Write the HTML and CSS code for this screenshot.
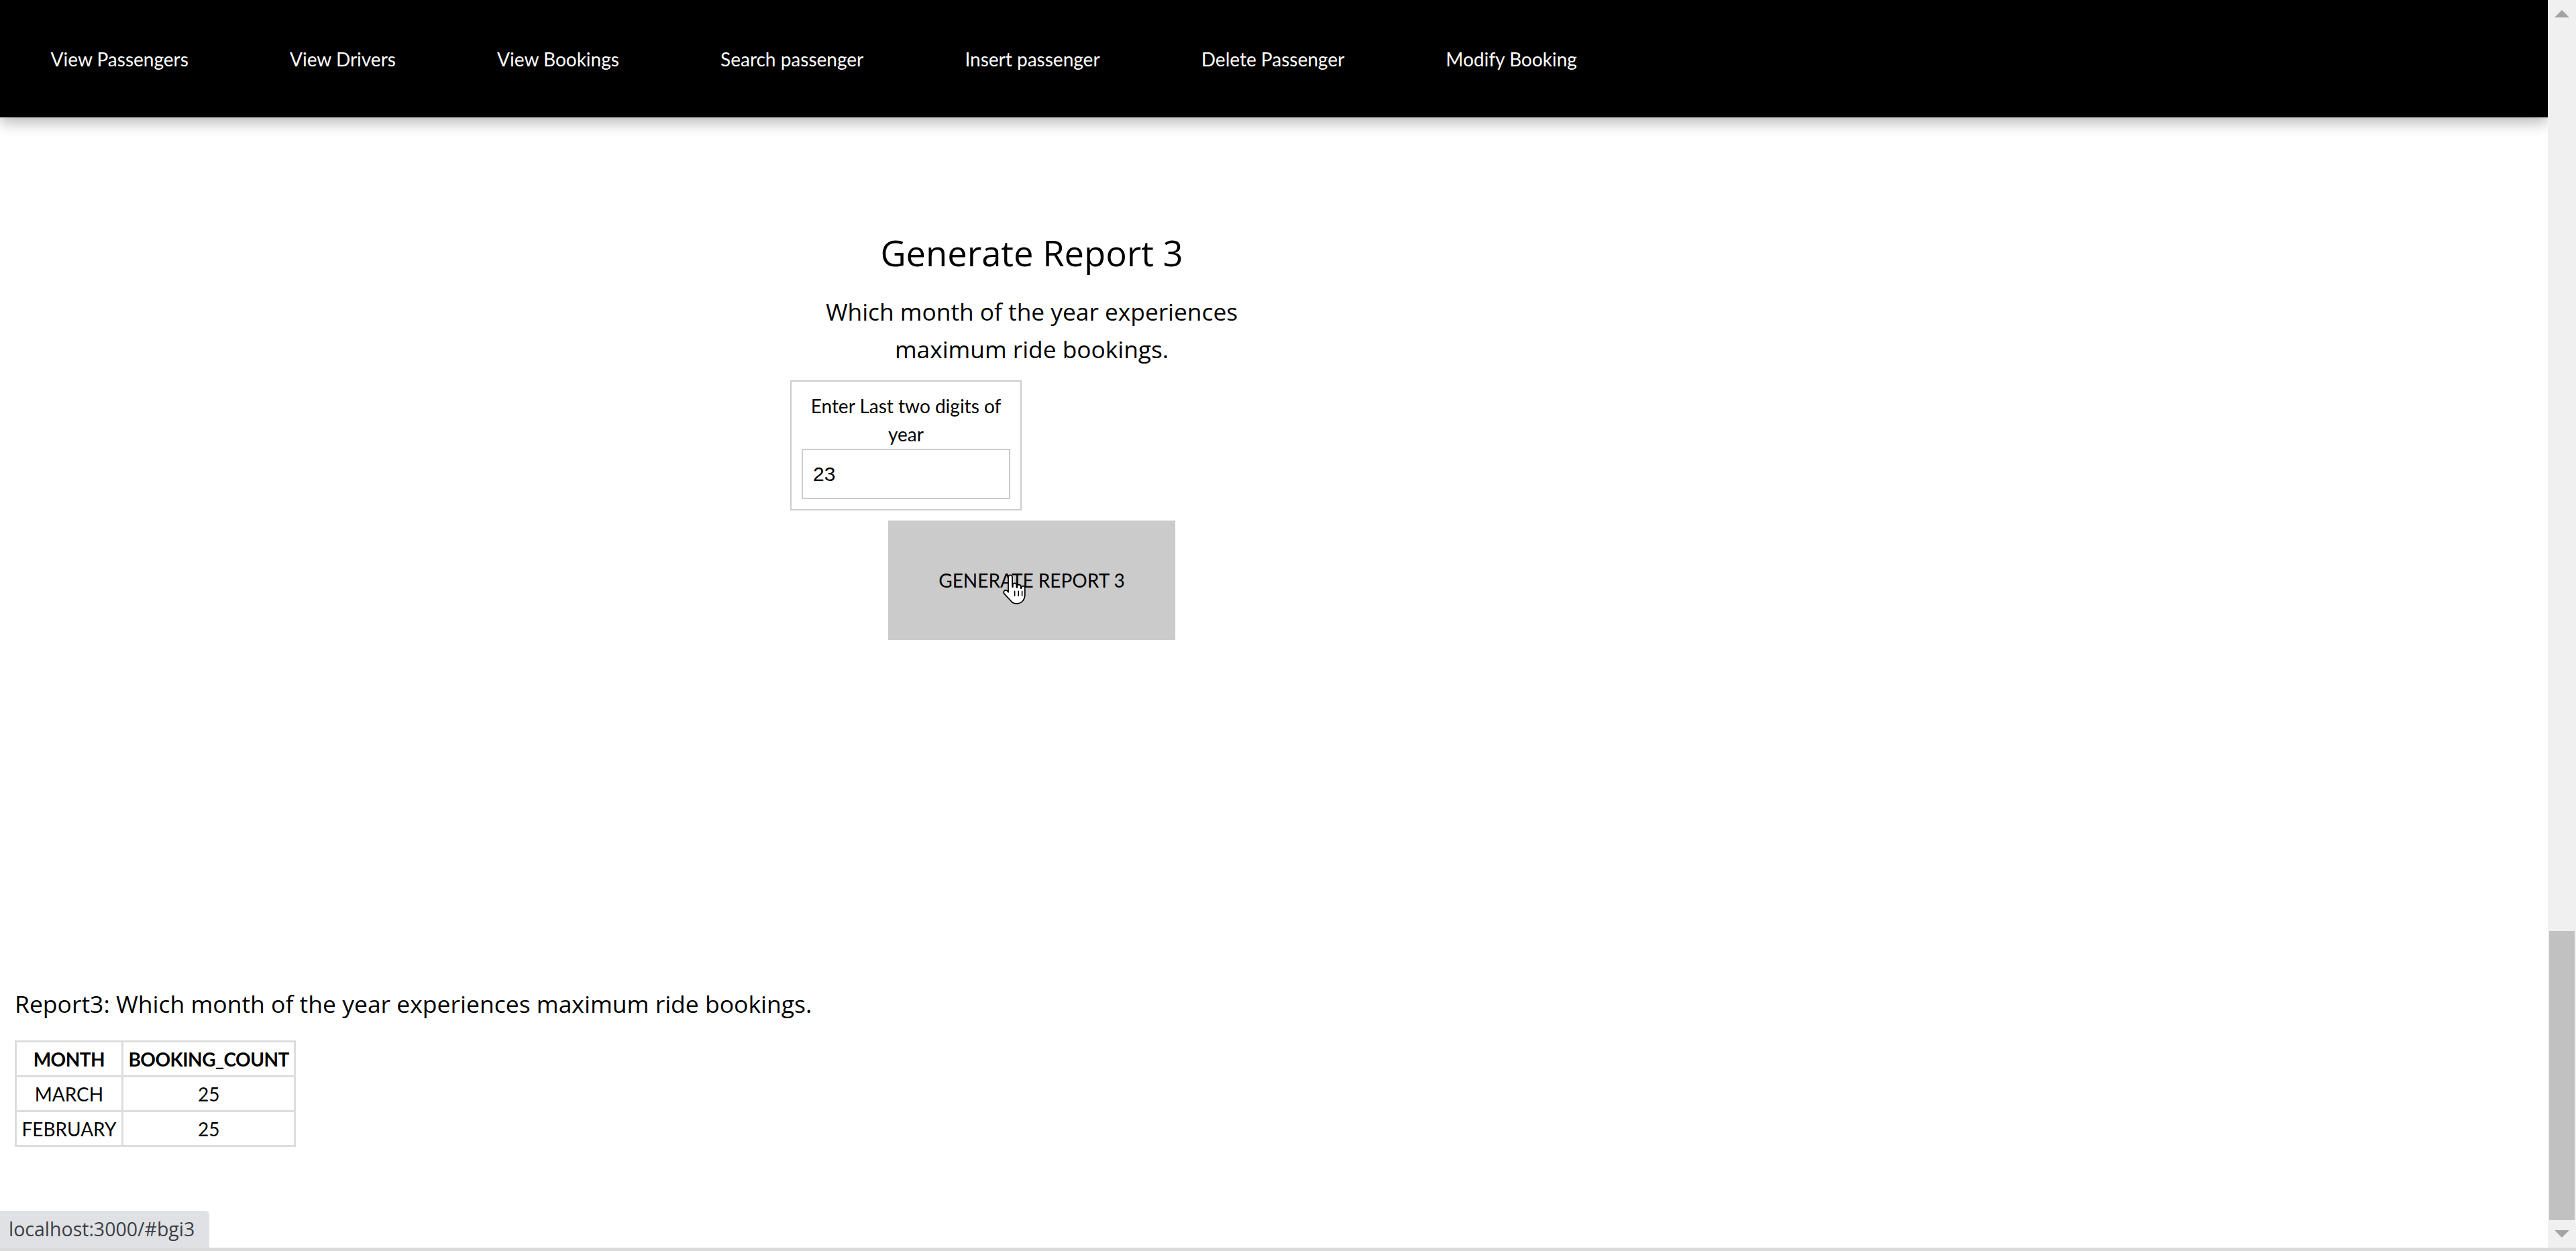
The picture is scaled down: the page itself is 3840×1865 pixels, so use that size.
FILE: index.html
```html
<!DOCTYPE html>
<html lang="en">
<head>
<meta charset="utf-8">
<title>Generate Report 3</title>
<link rel="stylesheet" href="styles.css">
</head>
<body class="page">
<div class="window">
  <div class="viewport">
    <nav class="topnav">
      <a class="topnav-link" href="#vp">View Passengers</a>
      <a class="topnav-link" href="#vd">View Drivers</a>
      <a class="topnav-link" href="#vb">View Bookings</a>
      <a class="topnav-link" href="#sp">Search passenger</a>
      <a class="topnav-link" href="#ip">Insert passenger</a>
      <a class="topnav-link" href="#dp">Delete Passenger</a>
      <a class="topnav-link" href="#mb">Modify Booking</a>
    </nav>

    <section class="report-card">
      <h2 class="report-heading">Generate Report 3</h2>
      <p class="report-desc">Which month of the year experiences maximum ride bookings.</p>
      <div class="report-form">
        <div class="field-box">
          <label class="field-label" for="yr">Enter Last two digits of year</label>
          <input class="field-input" id="yr" type="text" value="23">
        </div>
        <div class="button-wrap">
          <button class="gen-button" type="button">GENERATE REPORT 3</button>
          <svg class="cursor-hand" viewBox="0 0 18 24" width="36" height="48" aria-hidden="true">
            <path d="M6.5 1.2c.9 0 1.5.7 1.5 1.6v7.2h.4V8.6c0-.8.6-1.4 1.4-1.4s1.4.6 1.4 1.4V10.4h.4V9.7c0-.8.6-1.4 1.4-1.4s1.4.6 1.4 1.4v1.3h.4v-.4c0-.8.6-1.3 1.3-1.3s1.3.6 1.3 1.3v5.2c0 3.7-2.4 6.6-6 6.6h-.4c-2 0-3.3-.8-4.4-2.4L1.9 14.9c-.5-.7-.4-1.6.3-2.1.7-.5 1.6-.4 2.1.2l.7.9V2.8c0-.9.6-1.6 1.5-1.6z" fill="#fff" stroke="#000" stroke-width="0.9" stroke-linejoin="round"/>
            <path d="M9.8 13.2v3.4M12.6 13.2v3.4M15.3 13.2v3.4" stroke="#000" stroke-width="0.8" stroke-linecap="round"/>
          </svg>
        </div>
      </div>
    </section>

    <section class="result">
      <p class="result-title">Report3: Which month of the year experiences maximum ride bookings.</p>
      <table class="result-table">
        <thead>
          <tr><th class="cell cell-head">MONTH</th><th class="cell cell-head">BOOKING_COUNT</th></tr>
        </thead>
        <tbody>
          <tr><td class="cell">MARCH</td><td class="cell">25</td></tr>
          <tr><td class="cell">FEBRUARY</td><td class="cell">25</td></tr>
        </tbody>
      </table>
    </section>
  </div>

  <div class="scrollbar">
    <div class="scroll-btn"><span class="arrow arrow-up"></span></div>
    <div class="scroll-track"><div class="scroll-thumb"></div></div>
    <div class="scroll-btn"><span class="arrow arrow-down"></span></div>
  </div>
</div>
<div class="frame-edge"></div>
<div class="status-bubble">localhost:3000/#bgi3</div>
</body>
</html>
```

FILE: styles.css
```css
html {
  margin: 0;
  height: 100%;
}

.page {
  margin: 0;
  height: 100%;
  overflow: hidden;
  background: #fff;
  color: #000;
  font-family: "Open Sans", "Noto Sans", sans-serif;
}

.window {
  display: flex;
  height: 1860px;
}

.viewport {
  flex: 1;
  min-width: 0;
  overflow: hidden;
  position: relative;
}

/* ---------- navigation ---------- */
.topnav {
  height: 175px;
  background: #000;
  display: flex;
  align-items: center;
  box-shadow: 0 8px 20px rgba(0, 0, 0, 0.28);
  position: relative;
  z-index: 1;
}

.topnav-link {
  font-family: Lato, sans-serif;
  font-size: 28px;
  line-height: 34px;
  color: #fff;
  text-decoration: none;
  padding: 0 75.6px;
}

/* ---------- report card ---------- */
.report-card {
  width: 720px;
  margin-left: 1178px;
  padding-top: 164px;
  display: flex;
  flex-direction: column;
  align-items: center;
}

.report-heading {
  margin: 0;
  font-weight: 400;
  font-size: 52.5px;
  line-height: 75px;
}

.report-desc {
  margin: 22px 0 19px;
  font-size: 35.3px;
  line-height: 56px;
  text-align: center;
}

.report-form {
  align-self: stretch;
  display: flex;
  flex-direction: column;
  align-items: center;
}

.field-box {
  align-self: flex-start;
  width: 345px;
  box-sizing: border-box;
  border: 2px solid #cccccc;
  padding: 15px;
  text-align: center;
}

.field-label {
  display: block;
  font-family: Lato, sans-serif;
  font-size: 28px;
  line-height: 42px;
}

.field-input {
  display: block;
  width: 100%;
  height: 75px;
  box-sizing: border-box;
  margin: 1px 0 0;
  border: 2px solid #cccccc;
  padding: 0 15px;
  font-family: "Liberation Sans", Arial, sans-serif;
  font-size: 30px;
  color: #000;
  background: #fff;
  outline: none;
}

.button-wrap {
  margin-top: 15px;
  position: relative;
}

.gen-button {
  display: block;
  background: #cbcbcb;
  border: none;
  border-radius: 0;
  font-family: Lato, sans-serif;
  font-size: 28px;
  line-height: 28px;
  padding: 75px;
  color: #000;
}

.cursor-hand {
  position: absolute;
  left: 169px;
  top: 79px;
}

/* ---------- result ---------- */
.result {
  margin-top: 514px;
  padding: 0 22px;
}

.result-title {
  margin: 0 0 27px;
  font-size: 35.5px;
  line-height: 56px;
}

.result-table {
  border-collapse: collapse;
  font-family: Lato, sans-serif;
  font-size: 28px;
}

.cell {
  border: 3px solid #dddddd;
  padding: 7.5px;
  line-height: 34px;
  text-align: center;
  font-weight: 400;
}

.cell-head {
  font-weight: 700;
  letter-spacing: -0.5px;
}

/* ---------- fake scrollbar ---------- */
.scrollbar {
  width: 42px;
  background: #f0f0f0;
  display: flex;
  flex-direction: column;
}

.scroll-btn {
  height: 41px;
  display: flex;
  align-items: center;
  justify-content: center;
}

.scroll-track {
  flex: 1;
  display: flex;
  flex-direction: column;
  justify-content: flex-end;
  padding: 0 2px;
}

.scroll-thumb {
  height: 431px;
  background: #c1c1c1;
}

.arrow {
  width: 0;
  height: 0;
  border-left: 11px solid transparent;
  border-right: 11px solid transparent;
}

.arrow-up {
  border-bottom: 11px solid #a3a3a3;
}

.arrow-down {
  border-top: 11px solid #a3a3a3;
}

.frame-edge {
  height: 5px;
  background: #dadada;
}

/* ---------- browser status bubble ---------- */
.status-bubble {
  position: fixed;
  left: 0;
  bottom: 5px;
  height: 55px;
  line-height: 55px;
  padding: 0 22px 0 13px;
  background: #dfe1e5;
  border-top-right-radius: 6px;
  font-size: 28.5px;
  color: #3c4043;
}
```
